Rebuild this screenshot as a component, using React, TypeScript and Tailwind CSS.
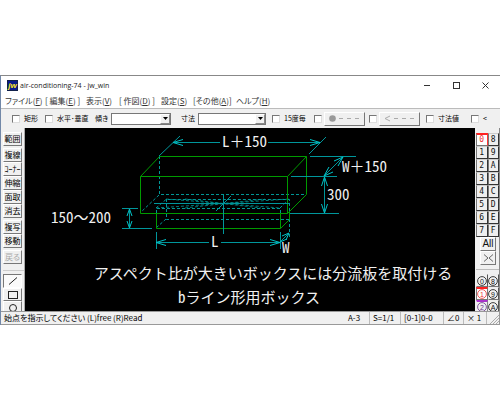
import React from "react";

const raised =
  "flex items-center justify-center border border-t-white border-l-white border-r-[#777] border-b-[#777] bg-[#f0f0f0] leading-none";

const menus = [
  { before: "ファイル(", key: "F", after: ")", width: "w-10" },
  { before: "[ 編集(", key: "E", after: ") ]", width: "w-[41px]" },
  { before: "表示(", key: "V", after: ")", width: "w-[33px]" },
  { before: "[ 作図(", key: "D", after: ") ]", width: "w-[42px]" },
  { before: "設定(", key: "S", after: ")", width: "w-8" },
  { before: "[その他(", key: "A", after: ")]", width: "w-[43px]" },
  { before: "ヘルプ(", key: "H", after: ")", width: "w-10" },
];

const toolGroups = [["範囲"], ["複線", "ｺｰﾅｰ", "伸縮", "面取", "消去"], ["複写", "移動"]];

const layers = ["0", "8", "1", "9", "2", "A", "3", "B", "4", "C", "5", "D", "6", "E", "7", "F"];
const layerGroups = ["0", "8", "1", "9", "2", "A"];

function Tick({ label, name, width }: { label?: string; name?: string; width: string }) {
  return (
    <label className={`flex shrink-0 items-center gap-1 whitespace-nowrap ${width}`}>
      <input
        type="checkbox"
        aria-label={name ?? label}
        className="size-2 shrink-0 appearance-none border border-t-[#777] border-l-[#777] border-r-[#ddd] border-b-[#ddd] bg-white checked:bg-[#333]"
      />
      {label && <span>{label}</span>}
    </label>
  );
}

function Combo({ label, labelWidth, width }: { label: string; labelWidth: string; width: string }) {
  return (
    <label className="flex shrink-0 items-center">
      <span className={`shrink-0 whitespace-nowrap ${labelWidth}`}>{label}</span>
      <span className={`grid h-3 items-center ${width}`}>
        <select className="col-start-1 row-start-1 h-3 w-full appearance-none border border-[#777] bg-white">
          <option value=""></option>
        </select>
        <span className="pointer-events-none col-start-1 row-start-1 mr-px flex h-2.5 w-2.5 items-center justify-center justify-self-end border border-t-white border-l-white border-r-[#888] border-b-[#888] bg-[#f0f0f0]">
          <svg viewBox="0 0 5 3" className="h-[3px] w-[5px]">
            <path d="M0 0H5L2.5 3Z" fill="#000" />
          </svg>
        </span>
      </span>
    </label>
  );
}

function TitleBar() {
  return (
    <header className="flex h-[18px] items-center bg-white pl-1.5 text-[#222]">
      <svg viewBox="0 0 11 11" className="size-[11px]">
        <rect width="11" height="11" fill="#0a1a8c" />
        <rect x="0.5" y="0.5" width="10" height="10" fill="none" stroke="#10204a" />
        <text x="5.5" y="8" textAnchor="middle" fontSize="8" fontWeight="bold" fontStyle="italic" fill="#ffec20" fontFamily="Liberation Sans, sans-serif">
          jw
        </text>
      </svg>
      <h1 className="ml-0.5 flex-1 font-['Open_Sans',sans-serif] text-[7px] leading-none whitespace-nowrap">
        air-conditioning-74 - jw_win
      </h1>
      <div className="flex">
        <button aria-label="最小化" className="flex h-4 w-[29px] items-center justify-center">
          <svg viewBox="0 0 7 7" className="size-[7px]"><path d="M0 3.5H6" stroke="#333" /></svg>
        </button>
        <button aria-label="最大化" className="flex h-4 w-[29px] items-center justify-center">
          <svg viewBox="0 0 7 7" className="size-[7px]"><rect x="0.5" y="0.5" width="6" height="6" fill="none" stroke="#333" /></svg>
        </button>
        <button aria-label="閉じる" className="flex h-4 w-[29px] items-center justify-center">
          <svg viewBox="0 0 7 7" className="size-[7px]"><path d="M0.5 0.5L6.5 6.5M6.5 0.5L0.5 6.5" stroke="#333" /></svg>
        </button>
      </div>
    </header>
  );
}

function ToolBar() {
  return (
    <div className="flex h-5 items-center overflow-hidden border-t border-[#bbb] bg-[#f0f0f0] pl-[11px] text-[7px] leading-none text-black">
      <Tick label="矩形" width="w-[33px]" />
      <Tick label="水平･垂直" width="w-[50px]" />
      <Combo label="傾き" labelWidth="w-4" width="w-[60px]" />
      <div className="w-2.5 shrink-0" />
      <Combo label="寸法" labelWidth="w-[17px]" width="w-[68px]" />
      <div className="w-1.5 shrink-0" />
      <Tick label="15度毎" width="w-[42px]" />
      <Tick name="線端 ●" width="w-2.5" />
      <button aria-label="●---" className={`${raised} h-3.5 w-[41px] shrink-0`}>
        <svg viewBox="0 0 32 7" className="h-[7px] w-8">
          <circle cx="3.5" cy="3.5" r="3.3" fill="#999" />
          <path d="M10 3.5H32" stroke="#aaa" strokeDasharray="4 4" />
        </svg>
      </button>
      <div className="w-1 shrink-0" />
      <Tick name="線端 <" width="w-2.5" />
      <button aria-label="<---" className={`${raised} h-3.5 w-[41px] shrink-0`}>
        <svg viewBox="0 0 32 7" className="h-[7px] w-8">
          <path d="M6 1L1 3.5L6 6" fill="none" stroke="#aaa" />
          <path d="M10 3.5H32" stroke="#aaa" strokeDasharray="4 4" />
        </svg>
      </button>
      <div className="w-1.5 shrink-0" />
      <Tick label="寸法値" width="w-[45px]" />
      <Tick label="<" width="w-7" />
    </div>
  );
}

function LeftTools() {
  return (
    <nav className="flex w-6 shrink-0 flex-col gap-0.5 overflow-hidden border-r border-[#aaa] bg-[#f0f0f0] pt-1 pl-0.5 text-[8px] text-black">
      {toolGroups.map((group) => (
        <div key={group[0]} className="flex shrink-0 flex-col">
          {group.map((name) => (
            <button key={name} className={`${raised} h-3.5 w-[19px] whitespace-nowrap`}>
              {name}
            </button>
          ))}
        </div>
      ))}
      <button className={`${raised} h-3.5 w-[19px] shrink-0 text-[#aaa]`}>戻る</button>
      <div className="mt-1 mb-px h-px shrink-0 bg-[#ccc]" />
      <div className="flex shrink-0 flex-col">
        <button aria-label="線" className="flex h-3.5 w-[19px] items-center justify-center border border-t-[#777] border-l-[#777] border-r-white border-b-white bg-[#fafafa]">
          <svg viewBox="0 0 10 8" className="h-2 w-2.5"><path d="M1 7.5L9 0.5" stroke="#222" /></svg>
        </button>
        <button aria-label="矩形" className={`${raised} h-[13px] w-[19px]`}>
          <svg viewBox="0 0 10 8" className="h-2 w-2.5"><rect x="0.5" y="0.5" width="9" height="7" fill="none" stroke="#222" /></svg>
        </button>
        <button aria-label="円弧" className={`${raised} h-3.5 w-[19px]`}>
          <svg viewBox="0 0 10 8" className="h-2 w-2.5"><circle cx="5" cy="4" r="3.5" fill="none" stroke="#222" /></svg>
        </button>
      </div>
    </nav>
  );
}

function RightTools() {
  return (
    <nav className="flex w-[25px] shrink-0 flex-col overflow-hidden border-r border-[#888] bg-[#f0f0f0] pt-[5px] pl-px text-[#111]">
      <div className="grid shrink-0 grid-cols-2 font-['DejaVu_Sans_Mono',monospace] text-[8px]">
        {layers.map((n) => (
          <button key={n} className={`flex h-[13px] items-center justify-center border leading-none ${n === "0" ? "border-[#777] border-r-[#f33] border-t-2 border-t-[#f22] bg-white text-[#e33]" : "border-t-[#ccc] border-l-[#777] border-r-[#333] border-b-[#333] bg-[#eee]"}`}>
            {n}
          </button>
        ))}
      </div>
      <button className={`${raised} ml-1 h-3.5 w-4 shrink-0 font-['Liberation_Sans',sans-serif] text-[10px]`}>All</button>
      <button aria-label="レイヤ反転" className={`${raised} ml-1 h-3.5 w-4 shrink-0`}>
        <svg viewBox="0 0 11 8" className="h-2 w-[11px]"><path d="M1 0.5L5 4L1 7.5M10 0.5L6 4L10 7.5" fill="none" stroke="#666" /></svg>
      </button>
      <div className="mt-1 mb-1 h-px shrink-0 bg-[#bbb]" />
      <div className="grid shrink-0 grid-cols-2">
        {layerGroups.map((n) => (
          <button key={n} className={`flex h-[13px] items-center justify-center border ${n === "1" ? "border-[#777] border-t-2 border-t-[#f22] bg-white text-[#e33]" : n === "2" ? "border-t-2 border-t-[#a3c] border-r-[#888] border-b-[#888] border-l-[#eee] text-[#638]" : "border-t-[#eee] border-l-[#eee] border-r-[#555] border-b-[#777]"}`}>
            <svg viewBox="0 0 10 10" className="size-2.5 shrink-0">
              <circle cx="5" cy="5" r="4.4" fill="none" stroke="currentColor" strokeWidth="0.8" />
              <text x="5" y="7.5" textAnchor="middle" fontSize="7" fill="currentColor" fontFamily="Liberation Sans, sans-serif">{n}</text>
            </svg>
          </button>
        ))}
      </div>
    </nav>
  );
}

function Half({ children }: { children: React.ReactNode }) {
  return <tspan className="[font-feature-settings:'hwid']">{children}</tspan>;
}

function Drawing() {
  return (
    <main className="min-w-0 flex-1 bg-black">
      <svg viewBox="0 0 450 183" className="h-full w-full font-['Noto_Sans_CJK_JP',sans-serif] text-[15px] [font-feature-settings:normal]">
        <g fill="none" stroke="#009696" strokeDasharray="3 2">
          <path d="M134.5 28V66.5H281M134 67L115 85" />
          <path d="M131.5 85V80.5H255.5V85M131 80L141 71.5H264.5V83M141.5 71V91.5H264M141 91L131 100M255 80L264 71" />
          <path d="M141 71L255 80M131 80L264 71M160 71L236 80M160 80L240 71" strokeWidth="0.8" />
          <path d="M264.5 91V109" />
        </g>
        <g fill="none" stroke="#009a00">
          <path d="M115.5 85.5V48.5H262.5V85.5ZM115.5 48.5L134.5 28.5H281.5V66.5L262.5 85.5M262.5 48.5L281.5 28.5" />
          <path d="M131.5 85.5V100.5H255.5V85.5M255.5 100.5L264.5 91.5V83.5" />
        </g>
        <g fill="none" stroke="#00969b">
          <path d="M134 28L155 8M148 14.5H195M243 14.5H295M284 26L301 9" />
          <path d="M129 75.5H264M198.5 67V106M191 83L206 68" />
          <path d="M285 28.5H331M266 48.5H312M265 85.5H314M318 29L299 48M299.5 49V85" />
          <path d="M97 80.5H113M97 100.5H127M104.5 81V100" />
          <path d="M131.5 104V121M255.5 104V121M131 114.5H184M196 114.5H255M255 114L264 105" />
        </g>
        <g fill="none" stroke="#00c3c8">
          <path d="M158 11.5L148 14.5L158 17.5M285 11.5L295 14.5L285 17.5" />
          <path d="M309 33L318 29L313 38M304 39L299 48L308 44M296.5 58L299.5 49L302.5 58M296.5 76L299.5 85L302.5 76" />
          <path d="M102 88L104.5 81L107 88M102 93L104.5 100L107 93" />
          <path d="M141 111.5L131 114.5L141 117.5M245 111.5L255 114.5L245 117.5M257 108L264 105L261 112M255 114L262 111" />
        </g>
        <g fill="#f0f0f0">
          <text x="197" y="19"><Half>L</Half>＋<Half>150</Half></text>
          <text x="317" y="44"><Half>W</Half>＋<Half>150</Half></text>
          <text x="302" y="72"><Half>300</Half></text>
          <text x="26" y="95"><Half>150</Half>～<Half>200</Half></text>
          <text x="186" y="119"><Half>L</Half></text>
          <text x="257" y="125"><Half>W</Half></text>
          <text x="248" y="151" textAnchor="middle">アスペクト比が大きいボックスには分流板を取付ける</text>
          <text x="224" y="175" textAnchor="middle"><Half>b</Half>ライン形用ボックス</text>
        </g>
      </svg>
    </main>
  );
}

function StatusBar() {
  const cell = "flex h-full shrink-0 items-center border-r border-[#bbb] pl-[3px] whitespace-nowrap";
  return (
    <footer className="flex h-3.5 items-center border-t border-r border-b border-[#999] bg-[#f0f0f0] pl-[3px] text-[8px] leading-none text-black">
      <p className="flex-1 whitespace-nowrap">始点を指示してください (L)free (R)Read</p>
      <span className={`${cell} w-[25px]`}>A-3</span>
      <span className={`${cell} w-[31px]`}>S=1/1</span>
      <span className={`${cell} w-[43px]`}>[0-1]0-0</span>
      <span className={`${cell} w-5`}>∠0</span>
      <span className={`${cell} w-[23px]`}>× 1</span>
      <svg viewBox="0 0 12 12" className="size-3 shrink-0">
        <path d="M3 12L12 3M6 12L12 6M9 12L12 9" stroke="#aaa" />
      </svg>
    </footer>
  );
}

export default function App() {
  return (
    <div className="min-h-screen bg-white pt-[75px] font-['Noto_Sans_CJK_JP',sans-serif] [font-feature-settings:'palt']">
      <div className="border-t border-l border-t-[#888] border-l-[#7288a8]">
        <TitleBar />
        <div role="menubar" className="flex h-[14px] items-center bg-white pl-1 text-[8px] leading-none text-[#333]">
          {menus.map((m) => (
            <button key={m.key} role="menuitem" className={`shrink-0 text-left whitespace-nowrap ${m.width}`}>
              {m.before}
              <span className="underline">{m.key}</span>
              {m.after}
            </button>
          ))}
        </div>
        <ToolBar />
        <div className="flex h-[183px]">
          <LeftTools />
          <Drawing />
          <RightTools />
        </div>
        <StatusBar />
      </div>
    </div>
  );
}
